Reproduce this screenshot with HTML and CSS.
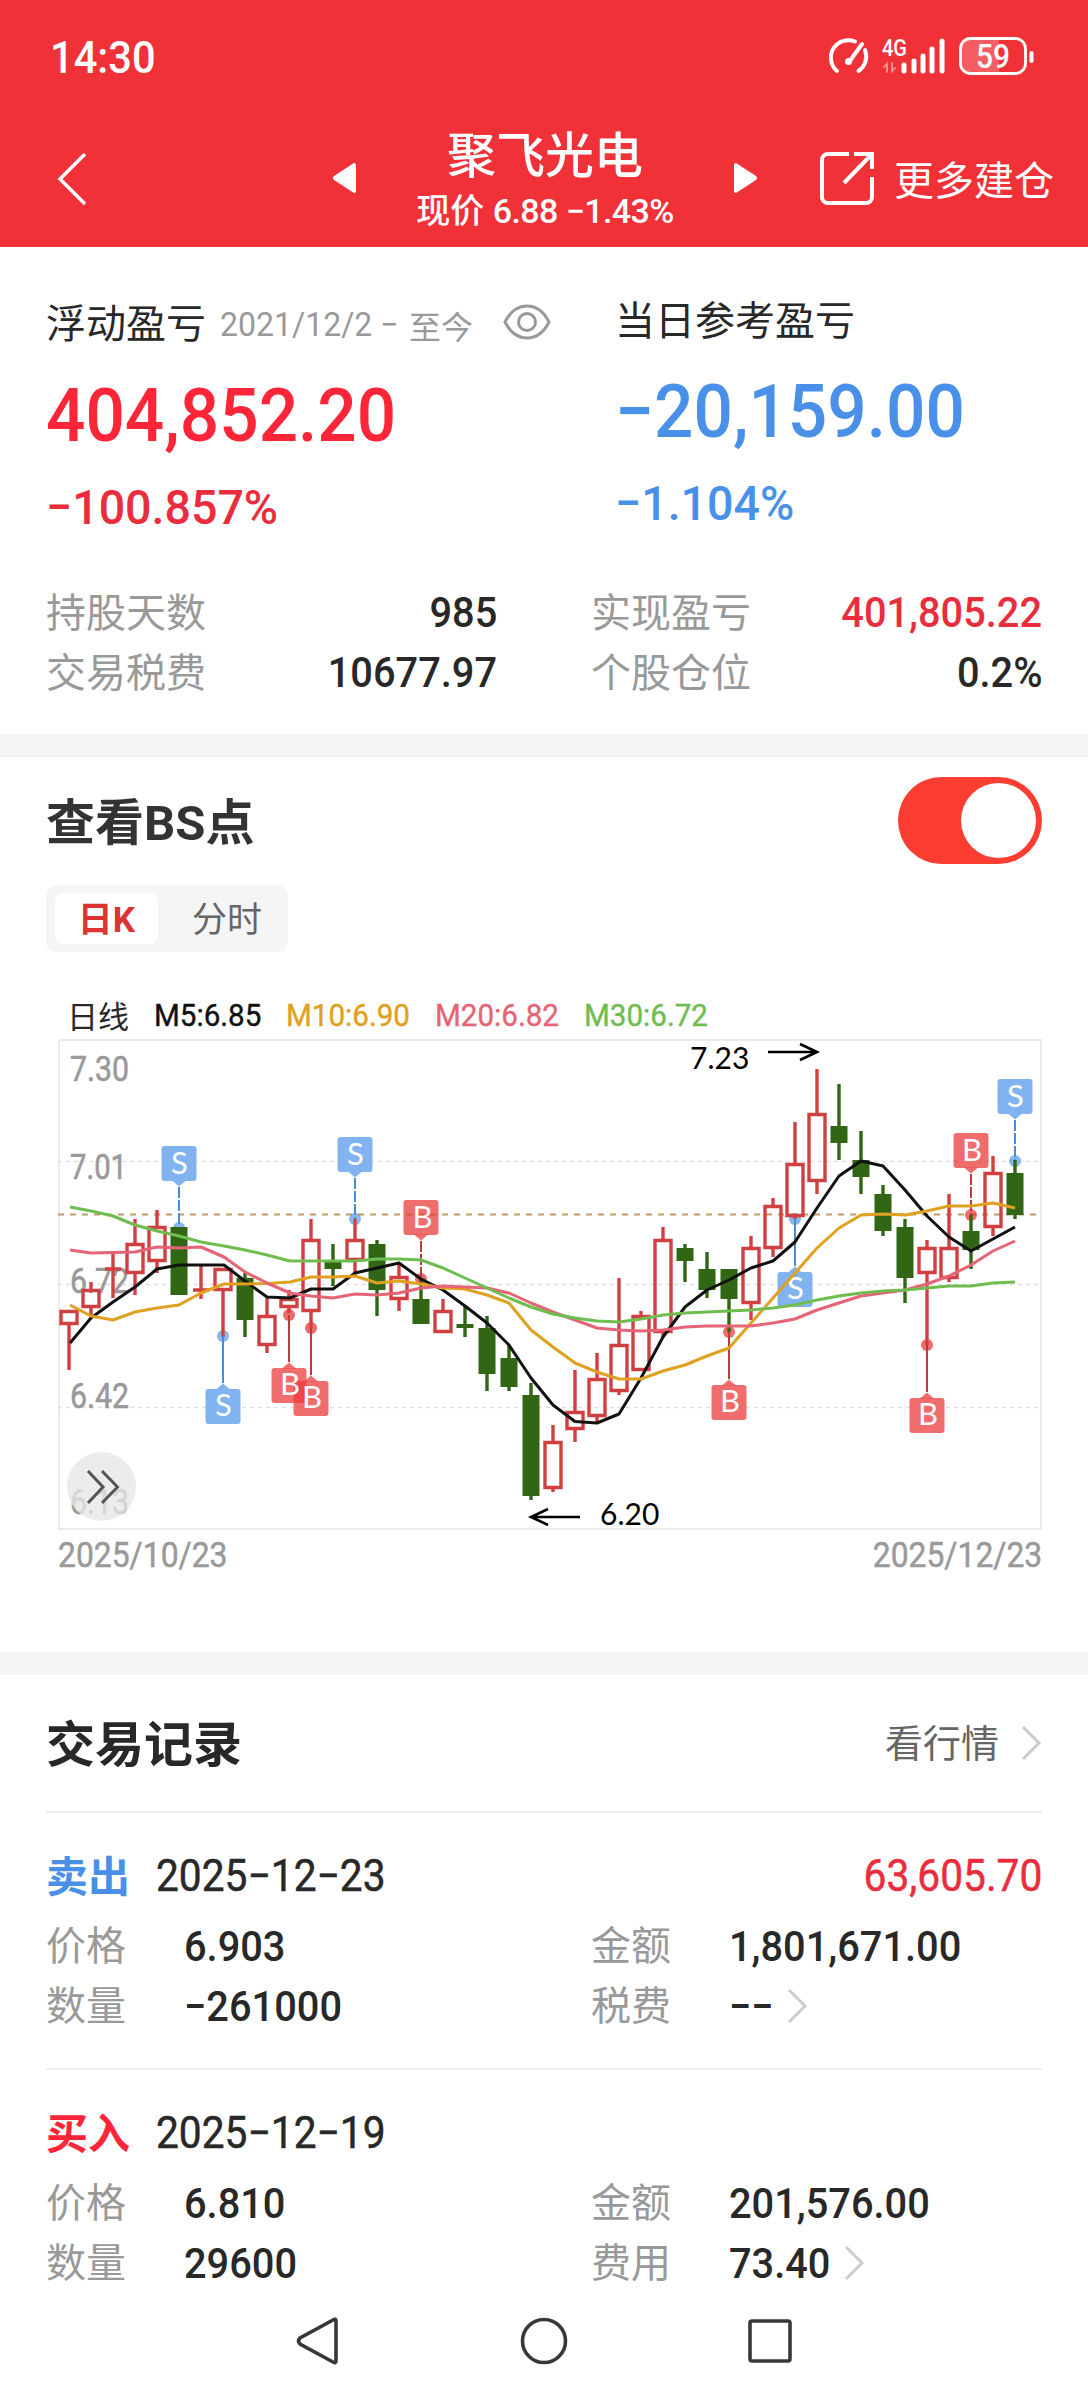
FILE: index.html
```html
<!DOCTYPE html>
<html lang="zh-CN">
<head>
<meta charset="utf-8">
<title>聚飞光电</title>
<link rel="stylesheet" href="styles.css">
</head>
<body>
<header class="top">
  <div class="status">
    <span class="clock num">14:30</span>
    <svg class="status-icons" width="210" height="44" viewBox="826 35 210 44" fill="none" stroke="#fff" stroke-linecap="round">
      <path d="M837 71A17.500 17.500 0 0 1 855 41.500M865 50A17.500 17.500 0 0 1 858.500 71" stroke-width="4"/>
      <path d="M862 44L850.500 60" stroke-width="4"/><circle cx="848.500" cy="61.500" r="3.500" fill="#fff" stroke="none"/>
      <text class="net" x="882" y="56" textLength="25" lengthAdjust="spacingAndGlyphs">4G</text>
      <path d="M887 72V64l-3 3M892 63v8l3-3" stroke-width="2" opacity=".45"/>
      <path d="M904 65v6M914 61v10M923 56v15M932 49v22M942 41v30" stroke-width="5"/>
      <path d="M971 39h28v34h-28a9 9 0 0 1-9-9V48a9 9 0 0 1 9-9z" fill="#fff" opacity=".22" stroke="none"/>
      <rect x="960.500" y="38.500" width="65" height="35" rx="10" stroke-width="2.800"/>
      <path d="M1031.500 53v8" stroke-width="4"/>
      <text class="battery" x="976" y="68" textLength="34" lengthAdjust="spacingAndGlyphs">59</text>
    </svg>
  </div>
  <div class="navbar">
    <svg class="back" width="34" height="56" viewBox="0 0 34 56" fill="none" stroke="#fff" stroke-width="3.500"><path d="M30 4L5 29L30 54"/></svg>
    <svg class="prev" width="26" height="32" viewBox="0 0 26 32"><path d="M22 1q2 0 2 2v26q0 2-2 2L2 18q-2-2 0-4z" fill="#fff"/></svg>
    <div class="stock"><div class="name">聚飞光电</div><div class="price">现价 <span>6.88 −1.43%</span></div></div>
    <svg class="next" width="26" height="32" viewBox="0 0 26 32"><path d="M4 1q-2 0-2 2v26q0 2 2 2L24 18q2-2 0-4z" fill="#fff"/></svg>
    <div class="more">
      <svg width="56" height="56" viewBox="0 0 56 56" fill="none" stroke="#fff" stroke-width="4"><path d="M30 4H9a6 6 0 0 0-6 6v37a6 6 0 0 0 6 6h38a6 6 0 0 0 6-6V27M35 4h18v15M53 4L25 33"/></svg>
      <span>更多建仓</span>
    </div>
  </div>
</header>

<section class="overview">
  <div class="totals">
    <div class="total up">
      <div class="caption"><span>浮动盈亏</span><span class="range"><i class="num">2021/12/2 −</i><i>至今</i></span>
        <svg class="eye" width="48" height="36" viewBox="0 0 48 36" fill="none" stroke="#999" stroke-width="3"><path d="M2 18C8 6 16 2 24 2s16 4 22 16C40 30 32 34 24 34S8 30 2 18z"/><circle cx="24" cy="18" r="8.500"/></svg>
      </div>
      <div class="big num">404,852.20</div>
      <div class="pct num">−100.857%</div>
    </div>
    <div class="total down">
      <div class="caption">当日参考盈亏</div>
      <div class="big num">−20,159.00</div>
      <div class="pct num">−1.104%</div>
    </div>
  </div>
  <dl class="stats">
    <div><dt>持股天数</dt><dd class="num">985</dd></div>
    <div><dt>实现盈亏</dt><dd class="num gain">401,805.22</dd></div>
    <div><dt>交易税费</dt><dd class="num">10677.97</dd></div>
    <div><dt>个股仓位</dt><dd class="num">0.2%</dd></div>
  </dl>
</section>

<section class="chart-section">
  <div class="chart-head"><h2>查看BS点</h2><span class="toggle"><i></i></span></div>
  <div class="tabs"><span class="tab active">日K</span><span class="tab">分时</span></div>
  <div class="legend"><span class="kind">日线</span><span class="num m5">M5:6.85</span><span class="num m10">M10:6.90</span><span class="num m20">M20:6.82</span><span class="num m30">M30:6.72</span></div>
  <svg class="chart" width="984" height="491" viewBox="58 1039 984 491">
    <defs>
      <g id="below"><path d="M-7 6L0 0L7 6z"/><rect x="-17.500" y="5.500" width="35" height="35" rx="3"/></g>
      <g id="above"><path d="M-7 -6L0 0L7 -6z"/><rect x="-17.500" y="-40.500" width="35" height="35" rx="3"/></g>
    </defs>
    <rect x="59" y="1040" width="982" height="489" fill="none" stroke="#ebebeb" stroke-width="2"/>
    <path d="M58 1161.500H1040M58 1284.500H1040M58 1407.500H1040" stroke="#e0e0e0" stroke-width="1.400" stroke-dasharray="4 4"/>
    <path d="M58 1214.500H1040" stroke="#c09c64" stroke-width="2" stroke-dasharray="6 6"/>
    <g class="axis">
      <text x="70" y="1081" textLength="59" lengthAdjust="spacingAndGlyphs">7.30</text>
      <text x="70" y="1179" textLength="57" lengthAdjust="spacingAndGlyphs">7.01</text>
      <text x="70" y="1293" textLength="59" lengthAdjust="spacingAndGlyphs">6.72</text>
      <text x="70" y="1408" textLength="59" lengthAdjust="spacingAndGlyphs">6.42</text>
      <text x="70" y="1514" textLength="59" lengthAdjust="spacingAndGlyphs">6.13</text>
    </g>
    <g class="sell-dots"><circle cx="179" cy="1228" r="6"/><circle cx="355" cy="1219" r="6"/><circle cx="223" cy="1336" r="6"/><circle cx="795" cy="1219" r="6"/><circle cx="1015" cy="1161" r="6"/></g>
    <g class="buy-dots"><circle cx="289" cy="1315" r="6"/><circle cx="311" cy="1328" r="6"/><circle cx="421" cy="1279" r="6"/><circle cx="729" cy="1332" r="6"/><circle cx="927" cy="1345" r="6"/><circle cx="971" cy="1215" r="6"/></g>
    <!-- rising candles: hollow bodies, then wicks -->
    <path class="rise" d="M61 1311.500h16v12h-16zM83 1290.500h16v16h-16zM127 1244.500h16v28h-16zM149 1227.500h16v33h-16zM215 1269.500h16v20h-16zM259 1316.500h16v28h-16zM281 1299.500h16v7h-16zM303 1240.500h16v70h-16zM347 1240.500h16v19h-16zM391 1277.500h16v21h-16zM435 1311.500h16v20h-16zM545 1442.500h16v45h-16zM567 1412.500h16v16h-16zM589 1379.500h16v36h-16zM611 1345.500h16v45h-16zM633 1316.500h16v53h-16zM655 1240.500h16v91h-16zM743 1248.500h16v54h-16zM765 1206.500h16v41h-16zM787 1164.500h16v51h-16zM809 1114.500h16v66h-16zM919 1248.500h16v24h-16zM941 1248.500h16v29h-16zM985 1173.500h16v53h-16z"/>
    <path class="rise" d="M69 1325V1370M91 1282V1290M91 1308V1317M113 1254V1298M105 1269H121M135 1219V1244M135 1273V1295M157 1210V1227M157 1261V1273M201 1266V1299M193 1290H209M223 1291V1337M267 1298V1315M267 1346V1353M289 1290V1299M289 1308V1313M311 1219V1240M311 1311V1328M355 1219V1240M355 1261V1276M399 1263V1276M399 1300V1311M443 1299V1310M553 1425V1442M553 1488V1492M575 1370V1412M575 1430V1442M597 1353V1378M597 1416V1424M619 1278V1344M619 1391V1395M641 1311V1315M663 1227V1240M663 1333V1337M751 1236V1247M751 1304V1320M773 1198V1205M773 1249V1257M795 1122V1163M795 1217V1219M817 1069V1113M817 1182V1194M927 1240V1247M927 1274V1345M949 1194V1247M949 1279V1282M993 1156V1172M993 1228V1236"/>
    <!-- falling candles -->
    <path class="fall body" d="M179 1227V1295M245 1278V1320M333 1262V1269M377 1244V1290M421 1299V1324M465 1324V1328M487 1328V1374M509 1358V1387M531 1395V1496M685 1248V1261M707 1269V1290M729 1269V1299M839 1126V1143M861 1160V1177M883 1194V1231M905 1227V1278M971 1231V1250M1015 1173V1215"/>
    <path class="fall" d="M245 1273V1337M333 1244V1286M377 1240V1316M421 1278V1324M465 1305V1337M487 1316V1391M509 1345V1391M531 1383V1500M685 1244V1282M707 1252V1298M729 1269V1332M839 1084V1160M861 1131V1194M883 1185V1236M905 1219V1303M971 1215V1269M1015 1160V1219"/>
    <g stroke-width="2">
      <path class="sell-line" stroke-dasharray="11 2" d="M179 1187V1226M355 1178V1219M1015 1120V1160"/>
      <path class="sell-line" d="M223 1336V1383M795 1219V1266"/>
      <path class="buy-line" stroke-dasharray="11 2" d="M421 1241V1279M971 1174V1215"/>
      <path class="buy-line" d="M289 1315V1362M311 1328V1375M729 1332V1379M927 1345V1392"/>
    </g>
    <g class="sell-flag"><use href="#above" x="179" y="1186.500"/><use href="#above" x="355" y="1177.500"/><use href="#above" x="1015" y="1119.500"/><use href="#below" x="223" y="1383.500"/><use href="#below" x="795" y="1266.500"/></g>
    <g class="buy-flag"><use href="#below" x="289" y="1362.500"/><use href="#below" x="311" y="1375.500"/><use href="#above" x="421" y="1240.500"/><use href="#below" x="729" y="1379.500"/><use href="#below" x="927" y="1392.500"/><use href="#above" x="971" y="1173.500"/></g>
    <g class="flag-text">
      <text x="179.500" y="1174">S</text><text x="355.500" y="1165">S</text><text x="1015.500" y="1107">S</text><text x="223.500" y="1416">S</text><text x="795.500" y="1299">S</text>
      <text x="290" y="1395">B</text><text x="312" y="1408">B</text><text x="422.500" y="1228">B</text><text x="730" y="1412">B</text><text x="928" y="1425">B</text><text x="972" y="1161">B</text>
    </g>
    <g fill="none" stroke-width="3" stroke-linejoin="round">
      <polyline stroke="#111" points="70,1343 91,1318 113,1302 135,1287 157,1269 179,1265 201,1265 224,1265 245,1281 267,1297 290,1298 311,1289 333,1289 355,1273 377,1268 399,1263 421,1279 443,1290 465,1306 487,1323 509,1345 531,1378 553,1405 575,1421.500 597,1423 619,1414 641,1378 663,1337 685,1307 707,1290 729,1280 751,1268 773,1261 795,1242 817,1208 839,1176 861,1161 883,1166 905,1190 927,1216 949,1237 971,1251 993,1239 1015,1227"/>
      <polyline stroke="#e0a020" points="70,1305 91,1316 113,1320 135,1312 157,1308 179,1305 201,1293 224,1284 245,1284 267,1283.500 290,1282 311,1277 333,1277 355,1276 377,1283 399,1281 421,1284 443,1288 465,1289 487,1295 509,1303 531,1330 553,1347 575,1363 597,1372 619,1379 641,1379 663,1371 685,1365 707,1356 729,1348 751,1323 773,1298 795,1273 817,1248 839,1228 861,1215 883,1214 905,1215 927,1211 949,1206 971,1206 993,1203 1015,1208"/>
      <polyline stroke="#e56475" points="70,1250 91,1253 135,1252 157,1247 179,1248 201,1247 224,1257 245,1272 267,1283 290,1293 311,1296 333,1298 355,1294 377,1295 399,1293 421,1288 443,1286 465,1287 487,1288 509,1293 531,1303 553,1312 575,1320 597,1328 619,1330 641,1331 663,1330 685,1327 707,1326 751,1326 773,1323 795,1319 817,1310 839,1303 861,1296 883,1293 905,1290 927,1284 949,1276 971,1265 993,1251 1015,1241"/>
      <polyline stroke="#6fbd50" points="70,1207 91,1211 113,1216 135,1225 157,1231 179,1236 201,1242 224,1246 245,1250 267,1255 290,1261 355,1261 377,1259 399,1259 421,1260 443,1268 465,1278 487,1288 509,1298 531,1307 553,1314 575,1318 597,1321 619,1322 641,1319 663,1315 685,1313 729,1311 751,1310 773,1308 795,1305 817,1300 839,1296 861,1293 883,1291 905,1290 927,1288 949,1286 971,1286 993,1283 1015,1282"/>
    </g>
    <path d="M768 1052H816M800 1044L817 1052L800 1060M580 1517H532M548 1509L531 1517L548 1525" fill="none" stroke="#000" stroke-width="2.600"/>
    <g class="extreme"><text x="690" y="1069">7.23</text><text x="600" y="1525">6.20</text></g>
    <circle cx="101.500" cy="1486.500" r="34.500" fill="#e7e7e7" opacity=".78"/>
    <path d="M88 1471L103 1487L88 1503M102 1471L117.500 1487L102 1503" fill="none" stroke="#555" stroke-width="3"/>
  </svg>
  <div class="dates"><span class="num">2025/10/23</span><span class="num">2025/12/23</span></div>
</section>

<section class="records">
  <div class="records-head"><h2>交易记录</h2><a class="quote"><span>看行情</span><svg class="chev" width="21" height="36" viewBox="0 0 21 36"><path d="M2 2L18 18L2 34"/></svg></a></div>
  <article class="record">
    <div class="deal"><b class="sell">卖出</b><time class="num">2025−12−23</time><span class="num gain">63,605.70</span></div>
    <dl>
      <div><dt>价格</dt><dd class="num">6.903</dd></div><div><dt>金额</dt><dd class="num">1,801,671.00</dd></div>
      <div><dt>数量</dt><dd class="num">−261000</dd></div><div><dt>税费</dt><dd class="num">−−</dd><svg class="chev" width="21" height="36" viewBox="0 0 21 36"><path d="M2 2L18 18L2 34"/></svg></div>
    </dl>
  </article>
  <article class="record">
    <div class="deal"><b class="buy">买入</b><time class="num">2025−12−19</time></div>
    <dl>
      <div><dt>价格</dt><dd class="num">6.810</dd></div><div><dt>金额</dt><dd class="num">201,576.00</dd></div>
      <div><dt>数量</dt><dd class="num">29600</dd></div><div><dt>费用</dt><dd class="num">73.40</dd><svg class="chev fee" width="21" height="36" viewBox="0 0 21 36"><path d="M2 2L18 18L2 34"/></svg></div>
    </dl>
  </article>
</section>

<nav class="system">
  <svg width="48" height="52" viewBox="0 0 48 52"><path d="M42 6v40q0 3-3 1L6 29q-3-3 0-6L39 5q3-2 3 1z"/></svg>
  <svg width="48" height="52" viewBox="0 0 48 52"><circle cx="24" cy="26" r="21.500"/></svg>
  <svg width="48" height="52" viewBox="0 0 48 52"><rect x="4" y="6" width="40" height="40" rx="2"/></svg>
</nav>
</body>
</html>
```
FILE: styles.css
```css
* { box-sizing: border-box; margin: 0; padding: 0; }
body { width: 1088px; height: 2400px; overflow: hidden; background: #fff; color: #282828; font-family: Roboto, "Noto Sans CJK SC", sans-serif; font-size: 40px; }
svg { display: block; flex: none; }
i { font-style: normal; }
h2 { font-size: 49px; font-weight: 700; margin-top: -5px; }

/* slightly condensed figures */
.num { display: inline-block; transform: scaleX(.925); transform-origin: left center; white-space: nowrap; }

.top { height: 247px; background: #f13138; color: #fff; }
.status { display: flex; justify-content: space-between; align-items: center; height: 114px; padding: 0 52px 0 50px; }
.clock { font-size: 45px; font-weight: 500; }
.net { font: 500 23px Roboto, sans-serif; fill: #fff; stroke: none; }
.battery { font: 500 33px Roboto, sans-serif; fill: #fff; stroke: none; }
.navbar { display: flex; align-items: center; height: 133px; padding: 0 34px 6px 55px; }
.prev { margin-left: 243px; }
.stock { width: 374px; text-align: center; }
.name { font-size: 49px; line-height: 60px; font-weight: 500; margin-top: 6px; }
.price { font-size: 34px; line-height: 48px; font-weight: 500; white-space: nowrap; }
.price span { letter-spacing: -.6px; }
.more { display: flex; align-items: center; gap: 19px; margin-left: auto; white-space: nowrap; }
.more svg { margin-top: 0; }

.overview { height: 487px; padding: 45px 46px 0; }
.totals { display: grid; grid-template-columns: 569px 1fr; height: 290px; }
.total { display: flex; flex-direction: column; gap: 23px; }
.caption { display: flex; align-items: center; height: 60px; white-space: nowrap; }
.caption > span:first-child { margin-top: -2px; }
.range { display: flex; align-items: center; color: #999; font-size: 32px; margin: 5px 0 0 14px; }
.range .num { width: 189px; font-size: 33px; transform: scaleX(.97); }
.eye { margin-left: 30px; }
.big { height: 80px; line-height: 80px; font-size: 75px; font-weight: 500; }
.pct { height: 60px; line-height: 60px; font-size: 49px; font-weight: 500; transform: scaleX(.95); }
.up .big { color: #fd2639; }
.up .pct, .gain { color: #e92d3c; }
.down { color: #4990e8; margin-top: -4px; }
.down .caption { color: #282828; }
.stats { display: grid; grid-template-columns: 451px 451px; column-gap: 94px; }
.stats div { display: flex; justify-content: space-between; height: 60px; line-height: 60px; }
.stats .num { transform-origin: right center; }
dt { color: #999; padding-top: 2px; }
dd { font-size: 43px; font-weight: 500; }

.chart-section { height: 918px; border-top: 23px solid #f4f4f4; padding: 20px 46px 0; }
.chart-head { display: flex; justify-content: space-between; align-items: center; height: 87px; }
.chart-head h2 { color: #333; }
.toggle { width: 144px; height: 87px; border-radius: 44px; background: #fb3d32; padding: 6px; }
.toggle i { display: block; width: 75px; height: 75px; margin-left: auto; border-radius: 50%; background: #fff; }
.tabs { display: flex; width: 242px; height: 67px; margin-top: 21px; padding: 8px 0 8px 9px; border-radius: 10px; background: #f5f5f5; }
.tab { flex: none; width: 103px; line-height: 55px; text-align: center; font-size: 35px; color: #666; }
.tab + .tab { width: 138px; }
.tab.active { height: 51px; background: #fff; border-radius: 8px; color: #dc3333; font-weight: 700; }
.legend { display: flex; align-items: center; height: 48px; margin: 39px 0 0 21px; font-size: 32px; white-space: nowrap; }
.legend .num { -webkit-text-stroke: .4px; }
.kind { width: 87px; font-size: 31px; margin-top: -2px; }
.m5 { width: 132px; color: #111; }
.m10 { width: 149px; color: #e0a020; }
.m20 { width: 149px; color: #e56475; }
.m30 { color: #6fbd50; }
.chart { margin-left: 12px; }
.axis { font: 400 35px Roboto, sans-serif; fill: #999; stroke: #999; stroke-width: .6px; }
.rise { fill: none; stroke: #d04040; stroke-width: 3.4px; }
.fall { stroke: #306614; stroke-width: 3.4px; }
.fall.body { stroke-width: 17px; }
.sell-dots { fill: #4990e8; opacity: .65; }
.buy-dots { fill: #e92d2d; opacity: .7; }
.sell-line { stroke: #4a8ccd; }
.buy-line { stroke: #bd3a3a; }
.sell-flag use { fill: #7fb1f1; fill-opacity: .98; }
.buy-flag use { fill: #eb3c3c; fill-opacity: .75; }
.flag-text { font: 400 31px Lato, sans-serif; fill: #fff; text-anchor: middle; }
.extreme { font: 400 30px Lato, sans-serif; fill: #000; }
.dates { display: flex; justify-content: space-between; padding-left: 12px; line-height: 50px; font-size: 35px; color: #999; -webkit-text-stroke: .5px; }
.dates .num { margin-top: 1px; transform: scaleX(.91); }
.dates .num:last-child { transform-origin: right center; }

.records { border-top: 23px solid #f4f4f4; padding: 0 46px; }
.records-head { display: flex; justify-content: space-between; align-items: center; height: 138px; border-bottom: 2px solid #eee; }
.quote { display: flex; align-items: center; gap: 22px; color: #666; font-size: 38px; }
.quote span { margin-top: -6px; }
.chev path { fill: none; stroke: #ccc; stroke-width: 3px; }
.record { height: 257px; padding-top: 33px; border-bottom: 2px solid #eee; }
.record:last-child { height: 223px; border: 0; }
.deal { display: flex; align-items: center; height: 60px; margin-bottom: 10px; font-size: 44px; }
.deal b { width: 110px; margin-top: -6px; font-size: 42px; }
.deal .num { -webkit-text-stroke: .5px; }
.sell { color: #4990e8; }
.buy { color: #fd2639; }
.deal .gain { margin-left: auto; transform-origin: right center; }
.record dl { display: grid; grid-template-columns: 545px 1fr; }
.record dl div { display: flex; align-items: center; height: 60px; line-height: 60px; }
.record dt { width: 138px; }
.record dd + .chev { margin-left: 10px; }
.record dd + .fee { margin-left: 5px; }

.system { display: flex; justify-content: space-between; align-items: center; height: 96px; padding: 0 294px; }
.system path, .system circle, .system rect { fill: none; stroke: #383838; stroke-width: 3.6px; }
```
